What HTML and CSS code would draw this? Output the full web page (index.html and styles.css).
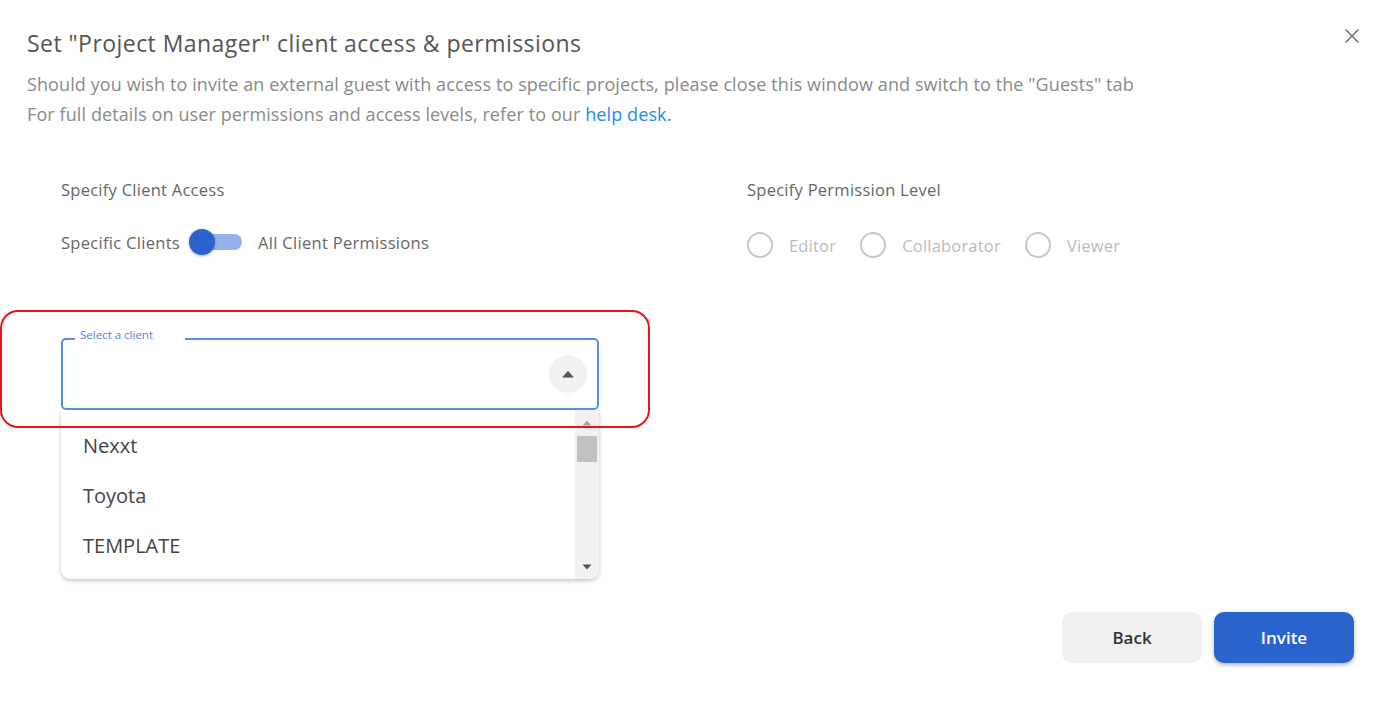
FILE: index.html
```html
<!DOCTYPE html>
<html>
<head>
<meta charset="utf-8">
<link rel="stylesheet" href="styles.css">
</head>
<body>
<div class="dialog">
  <div class="header">
    <h1 class="title">Set "Project Manager" client access &amp; permissions</h1>
    <button class="close" aria-label="Close">
      <svg width="16" height="16" viewBox="0 0 16 16"><path d="M1.5 1.5 L14.5 14.5 M14.5 1.5 L1.5 14.5" stroke="#666" stroke-width="1.4" fill="none"/></svg>
    </button>
  </div>
  <p class="desc">Should you wish to invite an external guest with access to specific projects, please close this window and switch to the "Guests" tab</p>
  <p class="desc">For full details on user permissions and access levels, refer to our <a class="link" href="#">help desk.</a></p>

  <div class="columns">
    <div class="col col-left">
      <div class="label">Specify Client Access</div>
      <div class="toggle-row">
        <span class="toggle-text">Specific Clients</span>
        <span class="switch"><span class="track"></span><span class="knob"></span></span>
        <span class="toggle-text">All Client Permissions</span>
      </div>
    </div>
    <div class="col col-right">
      <div class="label">Specify Permission Level</div>
      <div class="radio-row">
        <span class="radio"><span class="circle"></span>Editor</span>
        <span class="radio"><span class="circle"></span>Collaborator</span>
        <span class="radio"><span class="circle"></span>Viewer</span>
      </div>
    </div>
  </div>

  <div class="select-area">
    <div class="annot"></div>
    <div class="field">
      <span class="legend">Select a client</span>
      <span class="arrow-btn">
        <svg width="14" height="8" viewBox="0 0 14 8"><path d="M1 7.5 L7 1 L13 7.5 Z" fill="#555"/></svg>
      </span>
    </div>
    <div class="menu">
      <ul class="options">
        <li>Nexxt</li>
        <li>Toyota</li>
        <li>TEMPLATE</li>
      </ul>
      <div class="scrollbar">
        <svg class="sb-up" width="10" height="6" viewBox="0 0 10 6"><path d="M0.5 5.5 L5 0.5 L9.5 5.5 Z" fill="#a3a3a3"/></svg>
        <div class="thumb"></div>
        <div class="sb-space"></div>
        <svg class="sb-down" width="10" height="6" viewBox="0 0 10 6"><path d="M0.5 0.5 L5 5.5 L9.5 0.5 Z" fill="#505050"/></svg>
      </div>
    </div>
  </div>

  <div class="actions">
    <button class="btn btn-back">Back</button>
    <button class="btn btn-invite">Invite</button>
  </div>
</div>
</body>
</html>
```

FILE: styles.css
```css
* { box-sizing: border-box; }
html, body { margin: 0; padding: 0; background: #fff; }
body {
  font-family: "Open Sans", "Lato", sans-serif;
  width: 1391px;
  height: 701px;
  overflow: hidden;
}
.dialog {
  padding: 28px 27px 0 27px;
  height: 701px;
  position: relative;
}
.header {
  display: flex;
  justify-content: space-between;
  align-items: flex-start;
}
.title {
  margin: 0;
  font-size: 23px;
  letter-spacing: 0.45px;
  font-weight: 400;
  color: #555;
  line-height: 30px;
}
.close {
  border: none;
  background: none;
  padding: 0;
  margin: 0 4px 0 0;
  width: 16px;
  height: 16px;
  cursor: pointer;
  line-height: 0;
}
.desc {
  margin: 0;
  font-size: 18px;
  letter-spacing: 0.1px;
  line-height: 30px;
  color: #8a8a8a;
}
.header + .desc { margin-top: 11px; }
.link { color: #1e8ae8; text-decoration: none; }

.columns {
  display: flex;
  margin-top: 51px;
  padding-left: 34px;
}
.col-left { width: 686px; }
.label {
  font-size: 16.5px;
  letter-spacing: 0.26px;
  color: #666;
  line-height: 20px;
}
.toggle-row {
  display: flex;
  align-items: center;
  margin-top: 27px;
  height: 30px;
}
.toggle-text { font-size: 16.5px; letter-spacing: 0.3px; color: #666; }
.switch {
  position: relative;
  width: 53px;
  height: 26px;
  margin: 0 16px 0 9px;
  display: inline-block;
}
.track {
  position: absolute;
  left: 2px; right: 0;
  top: 5px;
  height: 16px;
  border-radius: 8px;
  background: #94b3ea;
}
.knob {
  position: absolute;
  left: 0; top: 0;
  width: 26px; height: 26px;
  border-radius: 50%;
  background: #2a63cb;
  box-shadow: 0 1px 3px rgba(0,0,0,0.3);
}
.radio-row {
  display: flex;
  align-items: center;
  margin-top: 30px;
  height: 30px;
}
.radio {
  display: flex;
  align-items: center;
  font-size: 16.5px;
  letter-spacing: 0.2px;
  color: #bbb;
  margin-right: 24px;
}
.circle {
  width: 26px; height: 26px;
  border: 2px solid #c8c8c8;
  border-radius: 50%;
  margin-right: 16px;
}

.select-area {
  position: relative;
  margin-top: 78px;
  padding-left: 34px;
  width: 572px;
}
.annot {
  position: absolute;
  left: -27px;
  top: -28px;
  width: 650px;
  height: 118px;
  border: 2px solid #e8141b;
  border-radius: 18px;
  pointer-events: none;
}
.field {
  position: relative;
  height: 72px;
  border: 2px solid #5a8ee0;
  border-radius: 5px;
  display: flex;
  align-items: center;
  justify-content: flex-end;
  padding-right: 10px;
}
.legend {
  position: absolute;
  left: 12px;
  top: -12px;
  background: #fff;
  padding: 0 32px 0 5px;
  font-size: 11.5px;
  line-height: 14px;
  color: #4f84dc;
}
.arrow-btn {
  width: 38px; height: 38px;
  border-radius: 50%;
  background: #f1f1f1;
  display: flex;
  align-items: center;
  justify-content: center;
}
.menu {
  display: flex;
  height: 169px;
  background: #fff;
  border-radius: 0 0 9px 9px;
  box-shadow: 0 2px 4px rgba(0,0,0,0.22), 0 0 2px rgba(0,0,0,0.06);
  overflow: hidden;
}
.options {
  list-style: none;
  margin: 0;
  padding: 11px 0 0 22px;
  flex: 1;
}
.options li {
  font-size: 20px;
  color: #444;
  line-height: 50px;
  height: 50px;
}
.scrollbar {
  width: 24px;
  background: #f1f1f1;
  display: flex;
  flex-direction: column;
  align-items: center;
  padding: 10px 0 9px;
}
.sb-up { flex: none; }
.thumb {
  width: 20px;
  height: 26px;
  background: #c1c1c1;
  margin-top: 10px;
}
.sb-space { flex: 1; }

.actions {
  position: absolute;
  right: 37px;
  top: 612px;
  display: flex;
  gap: 12px;
}
.btn {
  width: 140px;
  height: 51px;
  border: none;
  border-radius: 10px;
  font-family: "Open Sans", "Lato", sans-serif;
  font-size: 17px;
  font-weight: 600;
  cursor: pointer;
}
.btn-back { background: #f1f1f1; color: #333; }
.btn-invite { background: #2a63cb; color: #fff; box-shadow: 0 2px 4px rgba(0,0,0,0.3); }
```
